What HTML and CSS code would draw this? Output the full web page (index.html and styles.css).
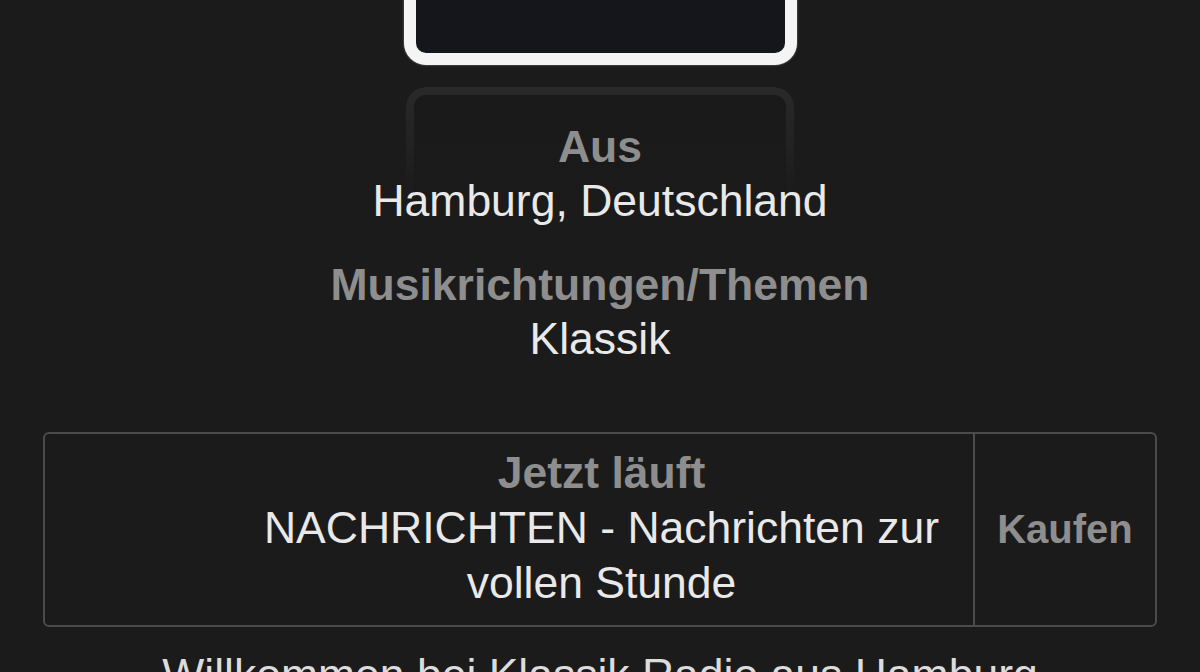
FILE: index.html
```html
<!DOCTYPE html>
<html lang="de">
<head>
<meta charset="utf-8">
<title>Sender</title>
<link rel="stylesheet" href="styles.css">
</head>
<body>
<div class="page">
  <div class="top-btn">
    <svg class="top-icon" width="26" height="20" viewBox="0 0 26 20"><circle cx="8" cy="10" r="6" fill="none" stroke="#2e2e2e" stroke-width="3"/><circle cx="18" cy="10" r="6" fill="none" stroke="#2e2e2e" stroke-width="3"/></svg>
  </div>
  <div class="art"></div>
  <div class="reflection"></div>
  <section class="info">
    <div class="group">
      <div class="label">Aus</div>
      <div class="value">Hamburg, Deutschland</div>
    </div>
    <div class="group group-2">
      <div class="label">Musikrichtungen/Themen</div>
      <div class="value">Klassik</div>
    </div>
  </section>
  <div class="now">
    <div class="now-art"></div>
    <div class="now-text">
      <div class="label">Jetzt läuft</div>
      <div class="value">NACHRICHTEN - Nachrichten zur vollen Stunde</div>
    </div>
    <div class="buy">Kaufen</div>
  </div>
  <p class="desc">Willkommen bei Klassik Radio aus Hamburg</p>
</div>
</body>
</html>
```
FILE: styles.css
```css
html, body {
  margin: 0;
  padding: 0;
  background: #1b1b1b;
}
body {
  width: 1200px;
  height: 672px;
  overflow: hidden;
  font-family: "Liberation Sans", Arial, sans-serif;
}
.page {
  position: relative;
  width: 1200px;
}
.top-btn {
  position: absolute;
  top: -20px;
  right: 38px;
  width: 142px;
  height: 48px;
  box-sizing: border-box;
  border: 2px solid #363636;
  border-radius: 8px;
}
.top-icon {
  position: absolute;
  left: 8px;
  top: 22px;
}
.art {
  width: 393px;
  height: 200px;
  margin: -135px auto 0;
  box-sizing: border-box;
  border: 12px solid #f4f4f4;
  border-radius: 22px;
  background: #14161c;
  box-shadow: 0 0 2px rgba(255,255,255,0.5);
}
.reflection {
  width: 388px;
  height: 110px;
  margin: 22px auto -77px;
  box-sizing: border-box;
  border: 8px solid #2a2a2a;
  border-bottom: none;
  border-radius: 20px 20px 0 0;
  background: #1a1a1a;
  -webkit-mask-image: linear-gradient(to bottom, rgba(0,0,0,1), rgba(0,0,0,0.5) 50%, rgba(0,0,0,0));
  mask-image: linear-gradient(to bottom, rgba(0,0,0,1), rgba(0,0,0,0.5) 50%, rgba(0,0,0,0));
}
.info {
  position: relative;
  text-align: center;
  font-size: 44.5px;
  line-height: 54px;
}
.group-2 {
  margin-top: 30px;
}
.label {
  font-weight: bold;
  color: #8e8e8e;
}
.value {
  color: #e9e9e9;
}
.now {
  display: flex;
  margin: 66px 43px 0;
  height: 195px;
  box-sizing: border-box;
  border: 2px solid #4b4b4b;
  border-radius: 6px;
  font-size: 44.5px;
  line-height: 55px;
}
.now-art {
  width: 185px;
  flex: none;
}
.now-text {
  flex: 1;
  text-align: center;
  padding-top: 11px;
}
.buy {
  width: 182px;
  flex: none;
  border-left: 2px solid #4b4b4b;
  display: flex;
  align-items: center;
  justify-content: center;
  font-size: 40px;
  font-weight: bold;
  color: #8e8e8e;
  box-sizing: border-box;
}
.desc {
  margin: 21px 0 0;
  text-align: center;
  font-size: 44.5px;
  line-height: 54px;
  color: #dcdcdc;
}
```
